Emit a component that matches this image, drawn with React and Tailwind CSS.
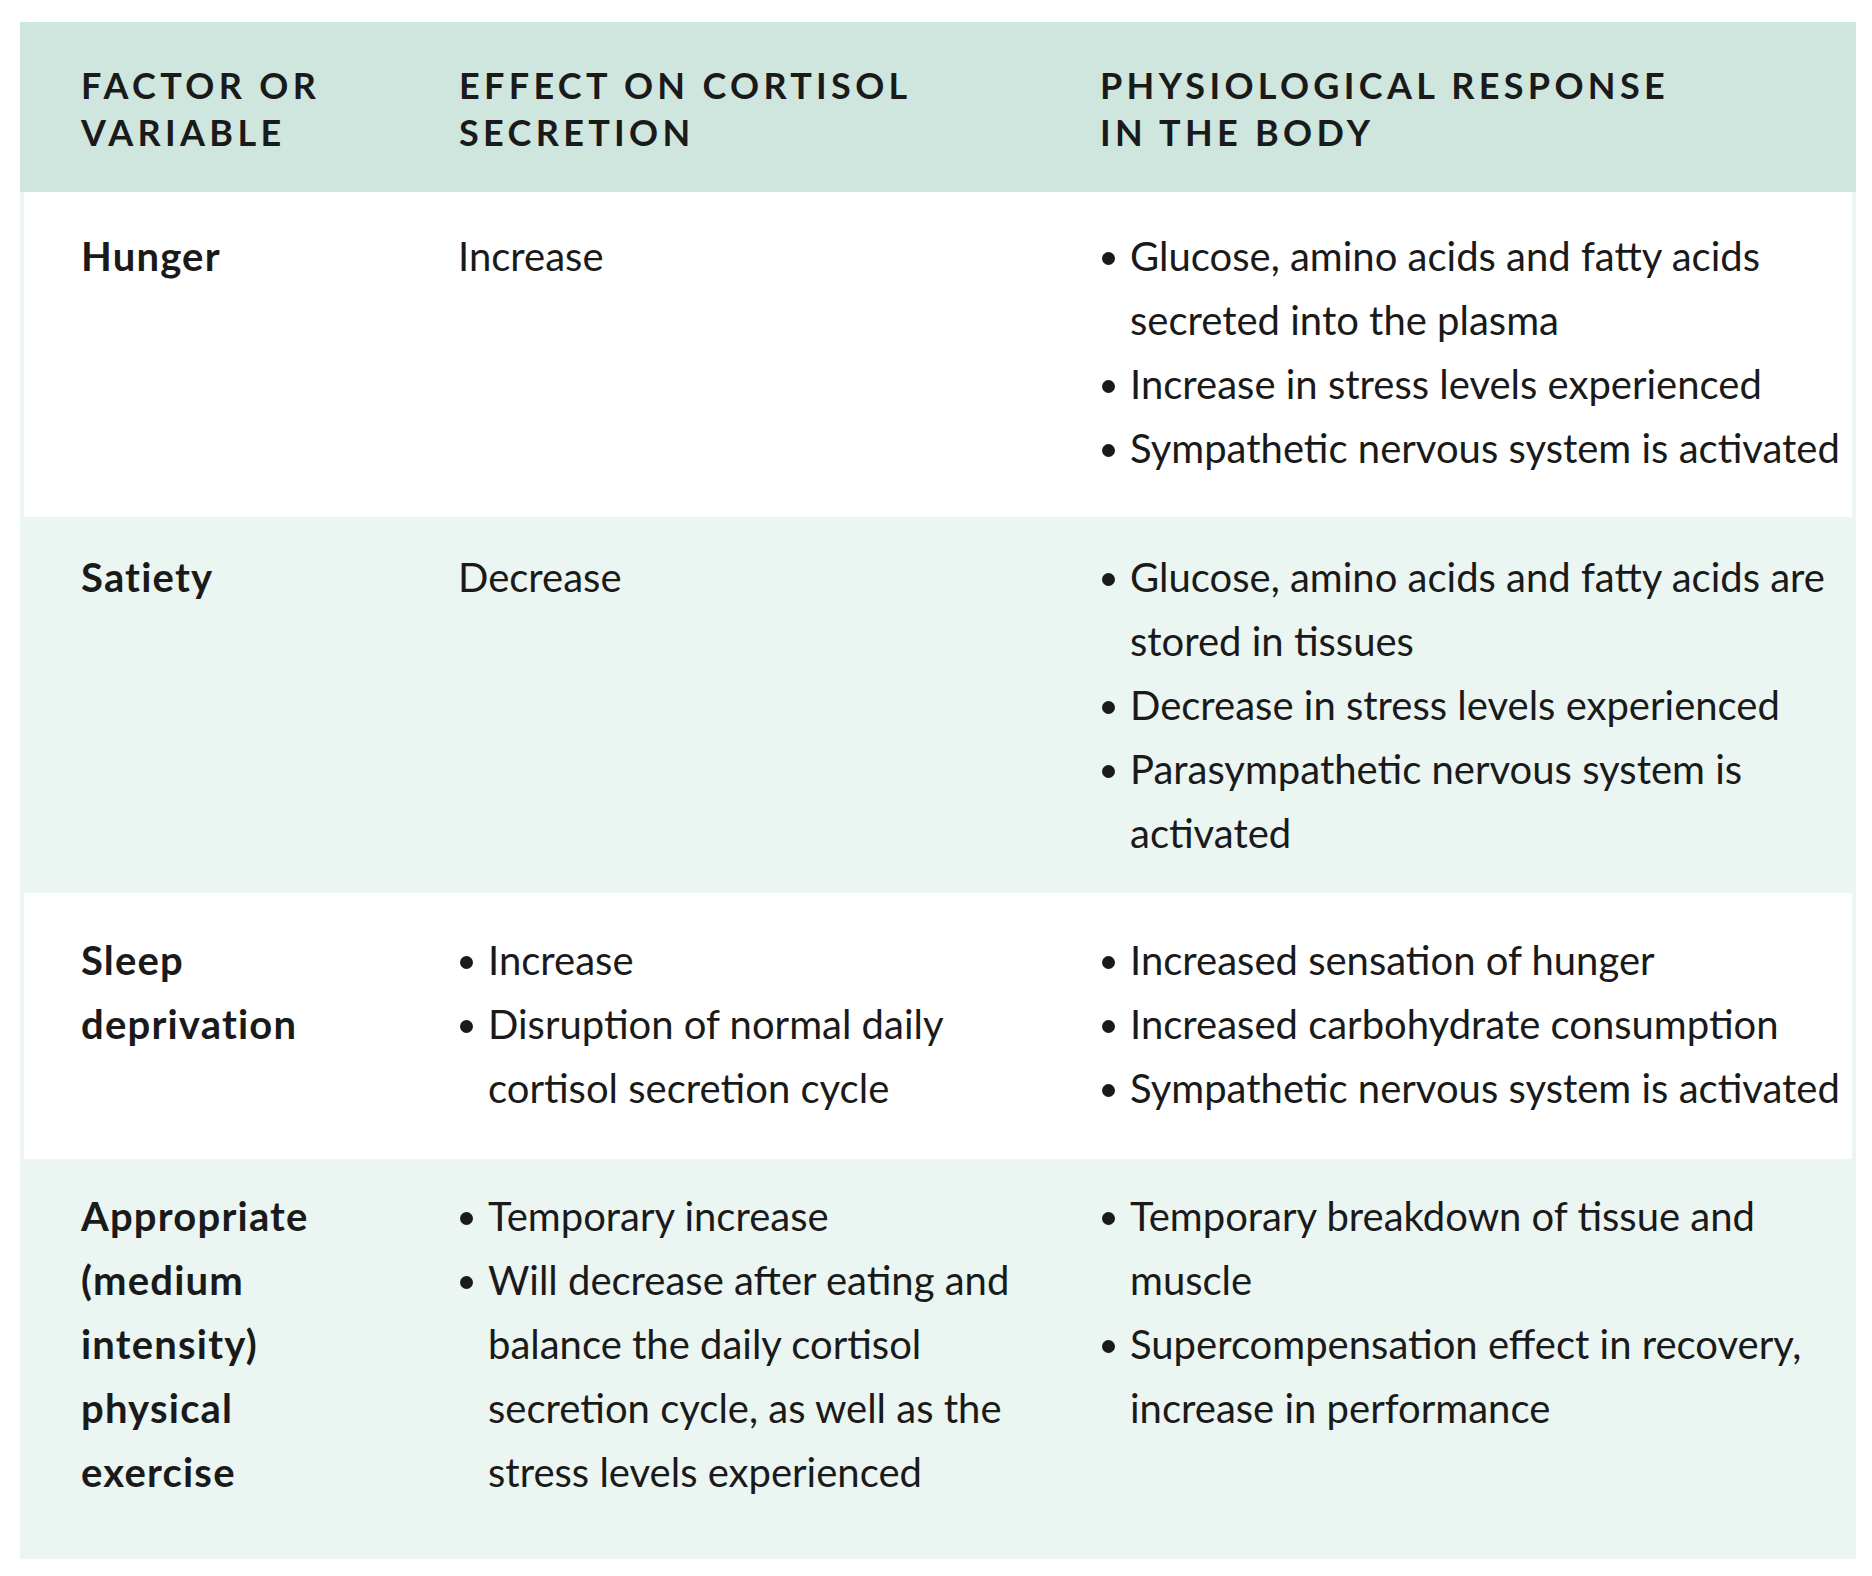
import React from 'react';

const rows = [
  {
    factor: 'Hunger',
    effect: ['Increase'],
    effectBullets: false,
    response: [
      'Glucose, amino acids and fatty acids secreted into the plasma',
      'Increase in stress levels experienced',
      'Sympathetic nervous system is activated',
    ],
    bg: 'bg-white shadow-[inset_4px_0_0_#ebf5f1,inset_-4px_0_0_#ebf5f1]',
    size: 'h-[325px] pt-[32px]',
  },
  {
    factor: 'Satiety',
    effect: ['Decrease'],
    effectBullets: false,
    response: [
      'Glucose, amino acids and fatty acids are stored in tissues',
      'Decrease in stress levels experienced',
      'Parasympathetic nervous system is activated',
    ],
    bg: 'bg-[#ebf5f1]',
    size: 'h-[376px] pt-[28px]',
  },
  {
    factor: 'Sleep deprivation',
    effect: ['Increase', 'Disruption of normal daily cortisol secretion cycle'],
    effectBullets: true,
    response: [
      'Increased sensation of hunger',
      'Increased carbohydrate consumption',
      'Sympathetic nervous system is activated',
    ],
    bg: 'bg-white shadow-[inset_4px_0_0_#ebf5f1,inset_-4px_0_0_#ebf5f1]',
    size: 'h-[266px] pt-[35px]',
  },
  {
    factor: 'Appropriate (medium intensity) physical exercise',
    effect: [
      'Temporary increase',
      'Will decrease after eating and balance the daily cortisol secretion cycle, as well as the stress levels experienced',
    ],
    effectBullets: true,
    response: [
      'Temporary breakdown of tissue and muscle',
      'Supercompensation effect in recovery, increase in performance',
    ],
    bg: 'bg-[#ebf5f1]',
    size: 'h-[400px] pt-[25px]',
  },
];

const Bullet = ({ text }) => (
  <li className="flex">
    <span className="w-[30px] shrink-0 flex items-center h-[64px]">
      <span className="block w-[13px] h-[13px] rounded-full bg-[#1a1a1a] ml-[2px] mt-[4px]" />
    </span>
    <span>{text}</span>
  </li>
);

const App = () => {
  return (
    <div className="min-h-screen bg-white pt-[22px] pl-[20px] pr-[16px] font-['Lato',sans-serif] text-[#1a1a1a]">
      <div className="bg-[#ebf5f1] h-[1537px]">
        <div className="grid grid-cols-[420px_660px_1fr] bg-[#cfe6df] h-[170px] pt-[40px] text-[36px] leading-[47px] font-bold uppercase tracking-[0.12em]">
          <div className="pl-[61px] pr-[20px]">Factor or variable</div>
          <div className="pl-[19px] pr-[60px]">Effect on cortisol secretion</div>
          <div className="pr-[160px]">Physiological response in the body</div>
        </div>

        {rows.map(row => (
          <div key={row.factor} className={`grid grid-cols-[420px_660px_1fr] ${row.bg} ${row.size} text-[40px] leading-[64px]`}>
            <div className="pl-[61px] pr-[70px] font-bold tracking-[0.03em]">{row.factor}</div>
            <div className="pl-[18px] pr-[36px]">
              {row.effectBullets ? (
                <ul>
                  {row.effect.map(t => <Bullet key={t} text={t} />)}
                </ul>
              ) : (
                <div>{row.effect[0]}</div>
              )}
            </div>
            <div className="pr-[12px]">
              <ul>
                {row.response.map(t => <Bullet key={t} text={t} />)}
              </ul>
            </div>
          </div>
        ))}
      </div>
    </div>
  );
};

export default App;
